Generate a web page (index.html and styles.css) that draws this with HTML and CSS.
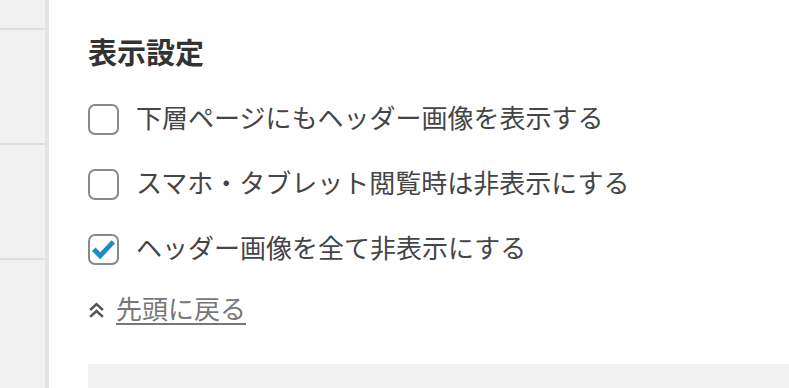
FILE: index.html
```html
<!DOCTYPE html>
<html lang="ja">
<head>
<meta charset="utf-8">
<link rel="stylesheet" href="styles.css">
</head>
<body>
<div class="page">
  <aside class="side">
    <div class="side-item first"></div>
    <div class="side-item"></div>
    <div class="side-item"></div>
    <div class="side-item"></div>
  </aside>
  <main class="main">
    <h2 class="title">表示設定</h2>
    <div class="options">
      <label class="opt"><span class="box"></span><span class="text">下層ページにもヘッダー画像を表示する</span></label>
      <label class="opt"><span class="box"></span><span class="text">スマホ・タブレット閲覧時は非表示にする</span></label>
      <label class="opt"><span class="box checked"><svg viewBox="0 0 27 27" width="27" height="27"><path d="M2 15 L5.6 11.6 L10.2 16.2 L21.6 4.2 L25 7.6 L10.2 23.2 Z" fill="#1e8cbe"/></svg></span><span class="text">ヘッダー画像を全て非表示にする</span></label>
    </div>
    <a class="back" href="#"><svg class="chev" viewBox="0 0 16 16" width="17" height="17"><path d="M2 7.5 L8 2 L14 7.5 M2 14 L8 8.5 L14 14" fill="none" stroke="#555" stroke-width="2.4"/></svg><span class="back-text">先頭に戻る</span></a>
    <div class="panel"></div>
  </main>
</div>
</body>
</html>
```
FILE: styles.css
```css
html, body {
  margin: 0;
  padding: 0;
  background: #fff;
}
body {
  font-family: "Noto Sans CJK JP", "Noto Sans", sans-serif;
  color: #444;
  overflow: hidden;
}
.page {
  display: flex;
  height: 388px;
}
.side {
  width: 45px;
  flex: none;
  background: #f1f1f1;
  border-right: 4px solid #e2e2e2;
  display: flex;
  flex-direction: column;
}
.side-item {
  height: 113px;
  border-top: 2px solid #dedede;
  flex: none;
}
.side-item.first {
  height: 28px;
  border-top: none;
}
.main {
  flex: 1;
  padding: 31px 0 0 39px;
  display: flex;
  flex-direction: column;
}
.title {
  margin: 0 0 33px;
  font-size: 29px;
  line-height: 40px;
  font-weight: bold;
  color: #333;
}
.options {
  display: flex;
  flex-direction: column;
  gap: 34px;
}
.opt {
  display: flex;
  align-items: center;
  height: 31px;
  gap: 17px;
}
.box {
  width: 27px;
  height: 27px;
  border: 2px solid #858a90;
  border-radius: 7px;
  background: #fff;
  flex: none;
  display: flex;
  align-items: center;
  justify-content: center;
  overflow: hidden;
}
.text {
  font-size: 26px;
  line-height: 31px;
  color: #454545;
  white-space: nowrap;
  margin-top: -6px;
}
.back {
  margin-top: 29px;
  display: flex;
  align-items: center;
  height: 36px;
  gap: 11px;
  text-decoration: none;
  color: #777;
}
.chev {
  flex: none;
  margin-top: 0;
}
.back-text {
  font-size: 26px;
  line-height: 36px;
  margin-top: -4px;
  text-decoration: underline;
  text-decoration-thickness: 2px;
  text-underline-offset: 4px;
  color: #777;
  white-space: nowrap;
}
.panel {
  margin-top: 38px;
  height: 40px;
  background: #f1f1f1;
}
```
